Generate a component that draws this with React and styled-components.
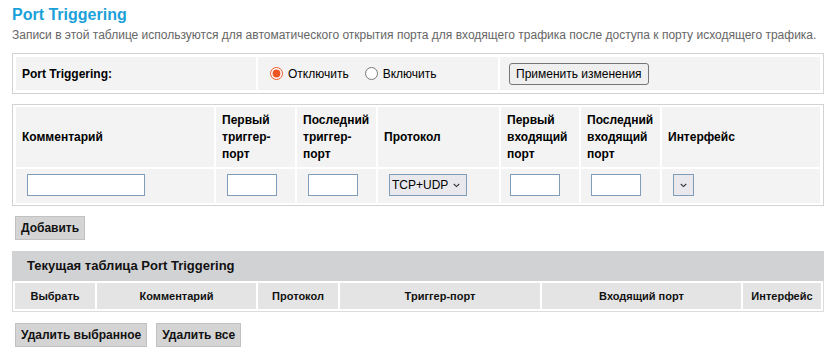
import React from 'react';
import styled, { createGlobalStyle } from 'styled-components';

const Global = createGlobalStyle`
  * { box-sizing: border-box; }
  body {
    margin: 0;
    background: #fff;
    font-family: "Liberation Sans", Arial, sans-serif;
    font-size: 12px;
    color: #000;
  }
`;

const Page = styled.div`
  padding: 6px 15px 20px 12px;
`;

const Title = styled.h1`
  margin: 0;
  font-size: 16px;
  line-height: 18px;
  font-weight: bold;
  color: #1ba1d9;
`;

const Desc = styled.p`
  margin: 4px 0 11px;
  font-size: 12px;
  line-height: 14px;
  color: #666;
  white-space: nowrap;
`;

const BoxTable = styled.table`
  width: 812px;
  table-layout: fixed;
  border: 1px solid #d3d3d3;
  padding: ${p => p.$pad};
  border-spacing: 2px;
  margin-bottom: ${p => p.$mb || 0}px;
`;

const Cell = styled.td`
  background: #f3f3f3;
  height: 33px;
  padding: 0 6px;
  vertical-align: middle;
  font-weight: ${p => (p.$bold ? 'bold' : 'normal')};
`;

const RadioGroup = styled.div`
  display: flex;
  align-items: center;
`;

const Radio = styled.input`
  width: 13px;
  height: 13px;
  margin: 0 5px 0 6px;
  accent-color: #ee5624;
`;

const RadioLabel = styled.label`
  margin-right: 10px;
`;

const NativeButton = styled.button`
  margin-left: 3px;
  height: 22px;
  padding: 0 6px;
  background: #efefef;
  border: 1px solid #767676;
  border-radius: 3px;
  font-family: inherit;
  font-size: 12px;
  color: #000;
`;

const HeadCell = styled.th`
  width: ${p => (p.$w ? `${p.$w}px` : 'auto')};
  background: #f3f3f3;
  padding: 5px 4px 4px 6px;
  text-align: left;
  vertical-align: middle;
  font-size: 12px;
  line-height: 17px;
  font-weight: bold;
`;

const InputCell = styled.td`
  background: #f3f3f3;
  height: 34px;
  padding: 5px 4px 0 ${p => p.$pl || 11}px;
  vertical-align: top;
`;

const TextInput = styled.input`
  display: block;
  width: ${p => p.$w}px;
  height: 22px;
  border: 1px solid #7f9db9;
  background: #fff;
  padding: 0 3px;
  font-family: inherit;
  font-size: 12px;
`;

const SelectWrap = styled.div`
  position: relative;
  width: ${p => p.$w}px;
  height: 22px;
`;

const Select = styled.select`
  appearance: none;
  display: block;
  width: 100%;
  height: 22px;
  border: 1px solid #7f9db9;
  border-radius: 0;
  background: #e9e9ed;
  padding: 0 0 0 2px;
  font-family: inherit;
  font-size: 12px;
  color: #000;
`;

const Chevron = styled.svg`
  position: absolute;
  top: 9px;
  right: ${p => p.$r}px;
  pointer-events: none;
`;

const GrayButton = styled.button`
  height: 24px;
  padding: 0 5px;
  background: #d4d4d4;
  border: 1px solid #c2c2c2;
  border-radius: 0;
  font-family: inherit;
  font-size: 12px;
  font-weight: bold;
  color: #111;
`;

const AddRow = styled.div`
  display: flex;
  margin: 10px 0 11px 3px;
`;

const ListTable = styled.table`
  width: 812px;
  table-layout: fixed;
  border: 1px solid #dcdcdc;
  border-top: none;
  border-spacing: 2px;
`;

const Caption = styled.caption`
  caption-side: top;
  height: 30px;
  line-height: 30px;
  padding-left: 15px;
  background: #d1d2d4;
  text-align: left;
  font-size: 13px;
  font-weight: bold;
  color: #111;
`;

const ListHead = styled.th`
  width: ${p => (p.$w ? `${p.$w}px` : 'auto')};
  height: 26px;
  background: #e4e4e4;
  text-align: center;
  vertical-align: middle;
  font-size: 11px;
  font-weight: bold;
  color: #111;
`;

const ButtonBar = styled.div`
  display: flex;
  gap: 9px;
  margin: 11px 0 0 3px;
`;

const ChevronIcon = ({ r }) => (
  <Chevron $r={r} width="7" height="5" viewBox="0 0 7 5">
    <path d="M0.8 1 L3.5 3.6 L6.2 1" fill="none" stroke="#333" strokeWidth="1.1" />
  </Chevron>
);

export default function App() {
  return (
    <Page>
      <Global />
      <Title>Port Triggering</Title>
      <Desc>
        Записи в этой таблице используются для автоматического открытия порта для входящего трафика после доступа к порту исходящего трафика.
      </Desc>

      <BoxTable $pad="1px" $mb={10}>
        <tbody>
          <tr>
            <Cell $bold style={{ width: 240 }}>Port Triggering:</Cell>
            <Cell style={{ width: 240 }}>
              <RadioGroup>
                <Radio type="radio" name="pt" id="pt-off" defaultChecked />
                <RadioLabel htmlFor="pt-off">Отключить</RadioLabel>
                <Radio type="radio" name="pt" id="pt-on" />
                <RadioLabel htmlFor="pt-on">Включить</RadioLabel>
              </RadioGroup>
            </Cell>
            <Cell>
              <NativeButton type="button">Применить изменения</NativeButton>
            </Cell>
          </tr>
        </tbody>
      </BoxTable>

      <BoxTable $pad="0 1px">
        <thead>
          <tr>
            <HeadCell $w={198}>Комментарий</HeadCell>
            <HeadCell $w={79}>Первый триггер-порт</HeadCell>
            <HeadCell $w={79}>Последний триггер-порт</HeadCell>
            <HeadCell $w={121}>Протокол</HeadCell>
            <HeadCell $w={78}>Первый входящий порт</HeadCell>
            <HeadCell $w={79}>Последний входящий порт</HeadCell>
            <HeadCell>Интерфейс</HeadCell>
          </tr>
        </thead>
        <tbody>
          <tr>
            <InputCell><TextInput $w={118} /></InputCell>
            <InputCell><TextInput $w={50} /></InputCell>
            <InputCell><TextInput $w={50} /></InputCell>
            <InputCell>
              <SelectWrap $w={78}>
                <Select defaultValue="TCP+UDP">
                  <option>TCP+UDP</option>
                  <option>TCP</option>
                  <option>UDP</option>
                </Select>
                <ChevronIcon r={7} />
              </SelectWrap>
            </InputCell>
            <InputCell $pl={9}><TextInput $w={50} /></InputCell>
            <InputCell $pl={10}><TextInput $w={50} /></InputCell>
            <InputCell>
              <SelectWrap $w={21}>
                <Select defaultValue="">
                  <option value=""></option>
                </Select>
                <ChevronIcon r={7} />
              </SelectWrap>
            </InputCell>
          </tr>
        </tbody>
      </BoxTable>

      <AddRow>
        <GrayButton type="button">Добавить</GrayButton>
      </AddRow>

      <ListTable>
        <Caption>Текущая таблица Port Triggering</Caption>
        <thead>
          <tr>
            <ListHead $w={80}>Выбрать</ListHead>
            <ListHead $w={159}>Комментарий</ListHead>
            <ListHead $w={80}>Протокол</ListHead>
            <ListHead $w={200}>Триггер-порт</ListHead>
            <ListHead $w={199}>Входящий порт</ListHead>
            <ListHead>Интерфейс</ListHead>
          </tr>
        </thead>
      </ListTable>

      <ButtonBar>
        <GrayButton type="button">Удалить выбранное</GrayButton>
        <GrayButton type="button">Удалить все</GrayButton>
      </ButtonBar>
    </Page>
  );
}
